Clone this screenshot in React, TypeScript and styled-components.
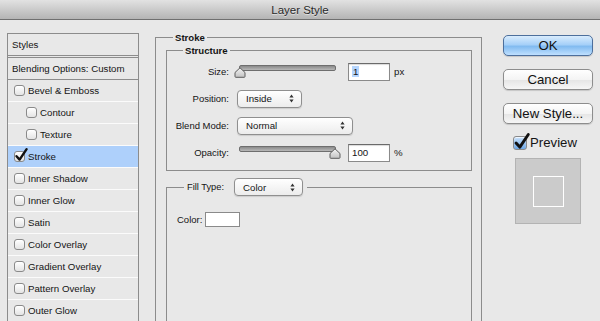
import React from "react";
import styled, { createGlobalStyle, css } from "styled-components";

const FONT = `"Liberation Sans", Arial, sans-serif`;
const LINE = "#8c8c8c";

const Global = createGlobalStyle`
  html, body { margin: 0; padding: 0; }
  body {
    background: #e8e8e8;
    font-family: ${FONT};
    color: #141414;
    overflow: hidden;
  }
`;

const Window = styled.div`
  width: 600px;
  height: 321px;
  overflow: hidden;
  display: flex;
  flex-direction: column;
  background: #e8e8e8;
  white-space: nowrap;
`;

const TitleBar = styled.div`
  height: 19px;
  flex: none;
  border-bottom: 1px solid #6f6f6f;
  background: linear-gradient(#e2e2e2, #b4b4b4);
  display: flex;
  align-items: center;
  justify-content: center;
  font-size: 11.5px;
  color: #2a2a2a;
  text-shadow: 0 1px 0 rgba(255, 255, 255, 0.5);
`;

const Body = styled.div`
  flex: 1;
  display: flex;
  align-items: flex-start;
  padding: 11px 0 0 7px;
`;

/* ---------- left styles list ---------- */

const StylesPanel = styled.div`
  width: 132px;
  flex: none;
  box-sizing: border-box;
  margin-top: 2px;
  border: 1px solid ${LINE};
  border-bottom: none;
  background: #e8e8e8;
  font-size: 9.7px;
`;

const PanelHeader = styled.div`
  height: 21px;
  display: flex;
  align-items: center;
  padding-left: 4px;
  border-bottom: 3px double ${LINE};
`;

const PanelRow = styled.div<{ $indent?: boolean; $selected?: boolean; $plain?: boolean }>`
  height: 21px;
  display: flex;
  align-items: center;
  gap: 3px;
  padding-left: ${(p) => (p.$plain ? 4 : p.$indent ? 18 : 6)}px;
  border-bottom: 1px solid ${(p) => (p.$plain ? LINE : "#fbfbfb")};
  background: ${(p) => (p.$selected ? "#aed0fb" : "transparent")};
`;

const Box = styled.span<{ $blue?: boolean; $size?: number }>`
  position: relative;
  flex: none;
  width: ${(p) => p.$size ?? 11}px;
  height: ${(p) => p.$size ?? 11}px;
  box-sizing: border-box;
  border: 1px solid #8a8a8a;
  border-radius: 3px;
  background: ${(p) =>
    p.$blue
      ? "linear-gradient(#c8e1fb, #6fa8e6)"
      : "linear-gradient(#ffffff, #e4e4e4)"};
  box-shadow: inset 0 1px 1px rgba(255, 255, 255, 0.8);
`;

const Tick = styled.svg`
  position: absolute;
  left: -1px;
  top: -4px;
  overflow: visible;
`;

const Check: React.FC<{ checked?: boolean; blue?: boolean; size?: number }> = ({
  checked,
  blue,
  size,
}) => (
  <Box $blue={blue} $size={size}>
    {checked && (
      <Tick width={(size ?? 11) + 3} height={(size ?? 11) + 3} viewBox="0 0 14 14">
        <path
          d="M2.5 8.2 L5.6 11.6 L12.6 1.2"
          fill="none"
          stroke="#111"
          strokeWidth="2.4"
          strokeLinecap="round"
          strokeLinejoin="round"
        />
      </Tick>
    )}
  </Box>
);

/* ---------- main ---------- */

const Main = styled.div`
  margin-left: 16px;
  width: 327px;
  flex: none;
  font-size: 9.5px;
`;

const Fieldset = styled.fieldset<{ $pad?: string; $height?: number }>`
  margin: 0;
  min-width: 0;
  box-sizing: border-box;
  border: 1px solid ${LINE};
  padding: ${(p) => p.$pad ?? "0"};
  ${(p) => p.$height && css`height: ${p.$height}px;`}
`;

const Legend = styled.legend<{ $offset: number }>`
  margin-left: ${(p) => p.$offset}px;
  padding: 0 2px;
  font-weight: bold;
  font-size: 9.6px;
  line-height: 13px;
  display: flex;
  align-items: center;
  gap: 10px;
`;

const FillLegend = styled(Legend)`
  font-weight: normal;
  font-size: 9.3px;
  padding: 0 4px 0 3px;
`;

const StructureGrid = styled.div`
  display: grid;
  grid-template-columns: 62px 1fr;
  grid-auto-rows: 27px;
  column-gap: 8px;
  align-items: center;
  padding-top: 1px;
  padding-bottom: 4px;
`;

const Label = styled.span`
  text-align: right;
`;

const ControlRow = styled.div`
  display: flex;
  align-items: center;
`;

const SliderWrap = styled.div`
  position: relative;
  width: 106px;
  height: 16px;
  margin-left: -3px;
  flex: none;
`;

const Track = styled.div`
  position: absolute;
  left: 5px;
  right: 4px;
  top: 1px;
  height: 4px;
  border-radius: 2px;
  border: 1px solid #6e6e6e;
  background: linear-gradient(#8a8a8a, #b8b8b8);
`;

const Thumb = styled.svg`
  position: absolute;
  top: 3px;
`;

const Slider: React.FC<{ value: number }> = ({ value }) => (
  <SliderWrap>
    <Track />
    <Thumb
      width="12"
      height="11"
      viewBox="0 0 12 11"
      style={{ left: `${value * 95}px` }}
    >
      <defs>
        <linearGradient id="thumbGrad" x1="0" y1="0" x2="0" y2="1">
          <stop offset="0" stopColor="#f4f4f4" />
          <stop offset="1" stopColor="#c2c2c2" />
        </linearGradient>
      </defs>
      <path
        d="M6 0.8 L11 5.5 L11 9.5 Q11 10.3 10.2 10.3 L1.8 10.3 Q1 10.3 1 9.5 L1 5.5 Z"
        fill="url(#thumbGrad)"
        stroke="#5c5c5c"
        strokeWidth="1"
      />
    </Thumb>
  </SliderWrap>
);

const NumberField = styled.div`
  width: 42px;
  height: 18px;
  box-sizing: border-box;
  margin-left: 8px;
  border: 1px solid #8a8a8a;
  border-top-color: #6a6a6a;
  background: #fff;
  box-shadow: inset 0 1px 1px rgba(0, 0, 0, 0.15);
  display: flex;
  align-items: center;
  padding-left: 3px;
  font-size: 9.7px;
`;

const Selected = styled.span`
  background: #b5d5fd;
  padding: 0 1px;
`;

const Unit = styled.span`
  margin-left: 4px;
  font-size: 9.7px;
`;

const SelectBox = styled.div<{ $width: number }>`
  width: ${(p) => p.$width}px;
  height: 18px;
  box-sizing: border-box;
  border: 1px solid #8f8f8f;
  border-radius: 4px;
  background: linear-gradient(#ffffff, #ececec);
  box-shadow: 0 1px 1px rgba(0, 0, 0, 0.12);
  display: flex;
  align-items: center;
  justify-content: space-between;
  padding: 0 7px 0 8px;
  font-weight: normal;
  font-size: 9.7px;
`;

const Arrows = () => (
  <svg width="5" height="9" viewBox="0 0 5 9">
    <path d="M2.5 0.5 L4.6 3.5 L0.4 3.5 Z M2.5 8.5 L4.6 5.5 L0.4 5.5 Z" fill="#333" />
  </svg>
);

const Select: React.FC<{ width: number; children: React.ReactNode }> = ({ width, children }) => (
  <SelectBox $width={width}>
    <span>{children}</span>
    <Arrows />
  </SelectBox>
);

const ColorRow = styled.div`
  display: flex;
  align-items: center;
  gap: 3px;
  padding: 16px 0 0 10px;
`;

const Swatch = styled.div`
  width: 35px;
  height: 15px;
  box-sizing: border-box;
  border: 1px solid #8a8a8a;
  background: #fff;
`;

/* ---------- right column ---------- */

const Side = styled.div`
  margin-left: 21px;
  margin-top: 4px;
  width: 90px;
  flex: none;
  display: flex;
  flex-direction: column;
  align-items: center;
`;

const Button = styled.div<{ $primary?: boolean }>`
  width: 90px;
  height: 21px;
  box-sizing: border-box;
  margin-bottom: 13px;
  border-radius: 5px;
  border: 1px solid ${(p) => (p.$primary ? "#4d6f9c" : "#8d8d8d")};
  background: ${(p) =>
    p.$primary
      ? "linear-gradient(#d9ecfd 0%, #a6d0f8 45%, #82bbf0 55%, #bfe0ff 100%)"
      : "linear-gradient(#ffffff 0%, #f4f4f4 50%, #e6e6e6 55%, #f6f6f6 100%)"};
  box-shadow: 0 1px 1px rgba(0, 0, 0, 0.15);
  display: flex;
  align-items: center;
  justify-content: center;
  font-size: 13.2px;
  color: #111;
`;

const PreviewToggle = styled.div`
  display: flex;
  align-items: center;
  gap: 3px;
  margin: -2px 6px 0 0;
  font-size: 13.2px;
`;

const PreviewSwatch = styled.div`
  margin-top: 8px;
  width: 66px;
  height: 66px;
  box-sizing: border-box;
  border: 1px solid #b3b3b3;
  background: #cbcbcb;
  display: flex;
  align-items: center;
  justify-content: center;
`;

const PreviewSquare = styled.div`
  width: 31px;
  height: 31px;
  box-sizing: border-box;
  border: 1px solid #fff;
`;

const items: { label: string; indent?: boolean; checked?: boolean }[] = [
  { label: "Bevel & Emboss" },
  { label: "Contour", indent: true },
  { label: "Texture", indent: true },
  { label: "Stroke", checked: true },
  { label: "Inner Shadow" },
  { label: "Inner Glow" },
  { label: "Satin" },
  { label: "Color Overlay" },
  { label: "Gradient Overlay" },
  { label: "Pattern Overlay" },
  { label: "Outer Glow" },
];

export default function App() {
  return (
    <Window>
      <Global />
      <TitleBar>Layer Style</TitleBar>
      <Body>
        <StylesPanel>
          <PanelHeader>Styles</PanelHeader>
          <PanelRow $plain>Blending Options: Custom</PanelRow>
          {items.map((it) => (
            <PanelRow key={it.label} $indent={it.indent} $selected={it.checked}>
              <Check checked={it.checked} />
              <span>{it.label}</span>
            </PanelRow>
          ))}
        </StylesPanel>

        <Main>
          <Fieldset $pad="0 9px 0 10px" $height={320}>
            <Legend $offset={7}>Stroke</Legend>
            <Fieldset>
              <Legend $offset={16}>Structure</Legend>
              <StructureGrid>
                <Label>Size:</Label>
                <ControlRow>
                  <Slider value={0} />
                  <NumberField>
                    <Selected>1</Selected>
                  </NumberField>
                  <Unit>px</Unit>
                </ControlRow>

                <Label>Position:</Label>
                <ControlRow>
                  <Select width={65}>Inside</Select>
                </ControlRow>

                <Label>Blend Mode:</Label>
                <ControlRow>
                  <Select width={116}>Normal</Select>
                </ControlRow>

                <Label>Opacity:</Label>
                <ControlRow>
                  <Slider value={1} />
                  <NumberField>100</NumberField>
                  <Unit>%</Unit>
                </ControlRow>
              </StructureGrid>
            </Fieldset>

            <Fieldset $height={200} style={{ marginTop: 7 }}>
              <FillLegend $offset={17}>
                Fill Type:
                <Select width={69}>Color</Select>
              </FillLegend>
              <ColorRow>
                Color:
                <Swatch />
              </ColorRow>
            </Fieldset>
          </Fieldset>
        </Main>

        <Side>
          <Button $primary>OK</Button>
          <Button>Cancel</Button>
          <Button>New Style...</Button>
          <PreviewToggle>
            <Check checked blue size={14} />
            Preview
          </PreviewToggle>
          <PreviewSwatch>
            <PreviewSquare />
          </PreviewSwatch>
        </Side>
      </Body>
    </Window>
  );
}
